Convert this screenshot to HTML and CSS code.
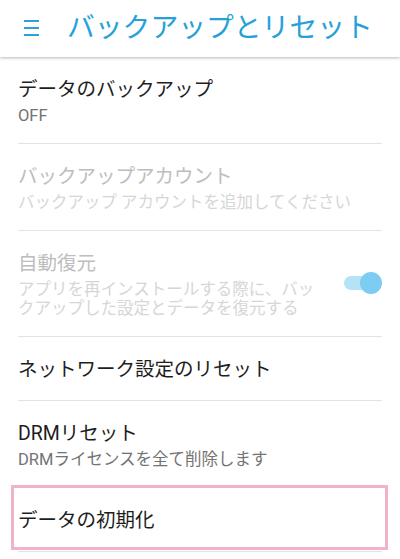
FILE: index.html
```html
<!DOCTYPE html>
<html lang="ja">
<head>
<meta charset="utf-8">
<link rel="stylesheet" href="styles.css">
</head>
<body>
<header class="appbar">
  <svg class="menu" width="16" height="17" viewBox="0 0 16 17"><rect x="0" y="0" width="15" height="2" /><rect x="0" y="7" width="15" height="2" /><rect x="0" y="14" width="15" height="2" /></svg>
  <h1 class="title">バックアップとリセット</h1>
</header>
<main class="list">
  <div class="item">
    <div class="text">
      <div class="primary">データのバックアップ</div>
      <div class="secondary">OFF</div>
    </div>
  </div>
  <div class="item disabled">
    <div class="text">
      <div class="primary">バックアップアカウント</div>
      <div class="secondary">バックアップ アカウントを追加してください</div>
    </div>
  </div>
  <div class="item disabled">
    <div class="text narrow">
      <div class="primary">自動復元</div>
      <div class="secondary">アプリを再インストールする際に、バックアップした設定とデータを復元する</div>
    </div>
    <div class="switch"><span class="track"></span><span class="thumb"></span></div>
  </div>
  <div class="item">
    <div class="text">
      <div class="primary">ネットワーク設定のリセット</div>
    </div>
  </div>
  <div class="item">
    <div class="text">
      <div class="primary">DRMリセット</div>
      <div class="secondary">DRMライセンスを全て削除します</div>
    </div>
  </div>
  <div class="item marked">
    <div class="text">
      <div class="primary">データの初期化</div>
    </div>
    <span class="highlight"></span>
  </div>
</main>
</body>
</html>
```
FILE: styles.css
```css
html, body {
  margin: 0;
  padding: 0;
  background: #ffffff;
}
body {
  width: 400px;
  height: 559px;
  overflow: hidden;
  font-family: Roboto, "Noto Sans CJK JP", sans-serif;
}
.appbar {
  position: relative;
  z-index: 1;
  height: 57px;
  display: flex;
  align-items: center;
  padding: 0 0 2px 24px;
  box-sizing: border-box;
  background: #ffffff;
  box-shadow: 0 1px 3px rgba(0, 0, 0, 0.28);
}
.menu {
  fill: #2aa2d6;
  flex: none;
  margin-top: 2px;
}
.title {
  margin: 0 0 0 27px;
  font-size: 27.8px;
  font-weight: 400;
  line-height: 40px;
  color: #25a1d7;
  white-space: nowrap;
}
.list {
  display: flex;
  flex-direction: column;
}
.item {
  position: relative;
  margin: 0 18px;
  padding: 21px 0 18px;
  border-bottom: 1px solid #e3e3e3;
  display: flex;
  align-items: center;
}
.text {
  flex: 1;
  min-width: 0;
}
.text.narrow {
  flex: none;
  width: 307px;
  margin-right: 19px;
}
.primary {
  font-size: 19.5px;
  line-height: 24px;
  color: #1e1e1e;
  white-space: nowrap;
}
.secondary {
  margin-top: 4px;
  font-size: 16.5px;
  line-height: 19px;
  color: #737373;
}
.disabled .primary {
  color: #bdbdbd;
}
.disabled .secondary {
  color: #d6d6d6;
}
.switch {
  position: relative;
  width: 38px;
  height: 22px;
  align-self: flex-start;
  margin-top: 20px;
  flex: none;
}
.track {
  position: absolute;
  left: 0;
  top: 4px;
  width: 34px;
  height: 14px;
  border-radius: 7px;
  background: #b6e2f6;
}
.thumb {
  position: absolute;
  right: 0;
  top: 0;
  width: 22px;
  height: 22px;
  border-radius: 50%;
  background: #7ccdf1;
}
.highlight {
  position: absolute;
  left: -7px;
  right: -6px;
  top: -3px;
  height: 65px;
  box-sizing: border-box;
  border: 3px solid #f2b2cb;
  pointer-events: none;
}
```
